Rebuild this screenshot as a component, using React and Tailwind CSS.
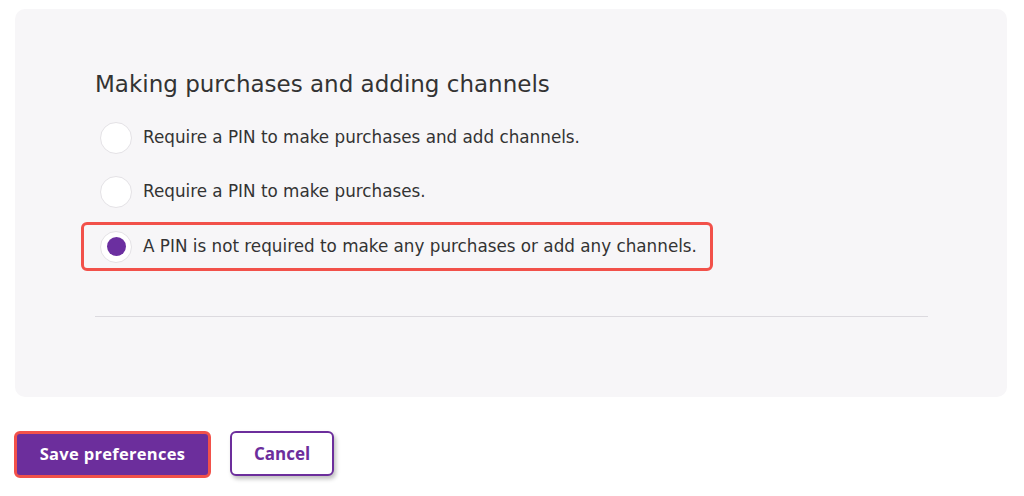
import { useState } from "react";

const options = [
    "Require a PIN to make purchases and add channels.",
    "Require a PIN to make purchases.",
    "A PIN is not required to make any purchases or add any channels.",
];

export default function App() {
    const [selected, setSelected] = useState(2);

    return (
        <div className="w-[1024px] h-[496px] bg-white font-['Open_Sans',sans-serif] text-[#333] overflow-hidden">
            {/* Settings panel */}
            <div className="ml-[15px] mr-[17px] mt-[9px] h-[388px] rounded-[10px] bg-[#f7f6f8] pl-[80px] pr-[79px] pt-[60px] font-['DejaVu_Sans',sans-serif]">
                <h2 className="text-[23px] leading-[30px] text-[#333]">
                    Making purchases and adding channels
                </h2>

                <div className="mt-[12px] flex flex-col">
                    {options.map((label, i) => {
                        const active = i === selected;
                        return (
                            <label
                                key={i}
                                onClick={() => setSelected(i)}
                                className={
                                    active
                                        ? "-ml-[14px] mt-[3px] flex h-[49px] w-[632px] cursor-pointer items-center gap-[11px] rounded-[6px] border-[3px] border-[#f2514a] pl-[16px]"
                                        : "-ml-[14px] flex h-[54px] cursor-pointer items-center gap-[11px] border-[3px] border-transparent pl-[16px]"
                                }
                            >
                                <span className="flex h-[32px] w-[32px] shrink-0 items-center justify-center rounded-full border border-[#e4e2e6] bg-white">
                                    {active && <span className="h-[19px] w-[19px] rounded-full bg-[#6b2fa0]" />}
                                </span>
                                <span className="text-[16.8px] text-[#333]">{label}</span>
                            </label>
                        );
                    })}
                </div>

                <div className="mt-[45px] h-px bg-[#dcdadf]" />
            </div>

            {/* Actions */}
            <div className="mt-[34px] ml-[14px] flex items-start gap-[19px]">
                <button className="h-[47px] w-[197px] rounded-[6px] border-[3px] border-[#f2514a] bg-[#6c2e9c] text-[16.5px] font-bold text-white tracking-[0.3px]">
                    Save preferences
                </button>
                <button className="h-[45px] w-[104px] rounded-[6px] border-2 border-[#6c2e9c] bg-white text-[17px] font-bold text-[#6c2e9c] shadow-[2px_3px_4px_rgba(0,0,0,0.25)]">
                    Cancel
                </button>
            </div>
        </div>
    );
}
